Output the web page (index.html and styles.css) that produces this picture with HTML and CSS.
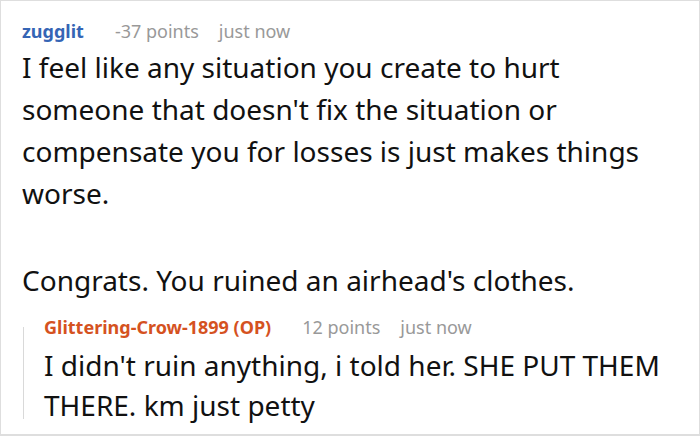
FILE: index.html
```html
<!DOCTYPE html>
<html>
<head>
<meta charset="utf-8">
<link rel="stylesheet" href="styles.css">
</head>
<body>
<div class="card">
  <div class="comment">
    <div class="meta">
      <span class="user">zugglit</span>
      <span class="info">-37 points</span>
      <span class="info">just now</span>
    </div>
    <div class="text">
      <p>I feel like any situation you create to hurt someone that doesn't fix the situation or compensate you for losses is just makes things worse.</p>
      <p>Congrats. You ruined an airhead's clothes.</p>
    </div>
    <div class="reply">
      <div class="meta">
        <span class="user op">Glittering-Crow-1899 (OP)</span>
        <span class="info">12 points</span>
        <span class="info">just now</span>
      </div>
      <div class="text reply-text">
        <p>I didn't ruin anything, i told her. SHE PUT THEM THERE. km just petty</p>
      </div>
    </div>
  </div>
</div>
</body>
</html>
```

FILE: styles.css
```css
html, body {
  margin: 0;
  padding: 0;
  background: #fff;
}
body {
  font-family: "Noto Sans", "Open Sans", sans-serif;
  color: #111;
}
.card {
  box-sizing: border-box;
  width: 700px;
  height: 436px;
  border: 1px solid #dedede;
  border-bottom-width: 2px;
  overflow: hidden;
}
.comment {
  padding: 17px 0 0 21px;
}
.meta {
  display: flex;
  gap: 20px;
  font-size: 18px;
  line-height: 26px;
}
.user {
  font-weight: bold;
  color: #3565b5;
  margin-right: 11px;
}
.user.op {
  color: #d5521f;
}
.info {
  color: #999;
}
.text {
  font-size: 28px;
  line-height: 42px;
  margin-top: 2px;
  padding-right: 40px;
}
.text p {
  margin: 0 0 45px 0;
}
.text p:last-child {
  margin-bottom: 0;
}
.reply {
  position: relative;
  margin-top: 13px;
  padding-left: 22px;
}
.reply::before {
  content: "";
  position: absolute;
  left: 1px;
  top: 13px;
  bottom: 6px;
  width: 1px;
  background: #d9d9d9;
}
.reply-text {
  line-height: 40px;
  margin-top: 5px;
  padding-right: 15px;
}
```
